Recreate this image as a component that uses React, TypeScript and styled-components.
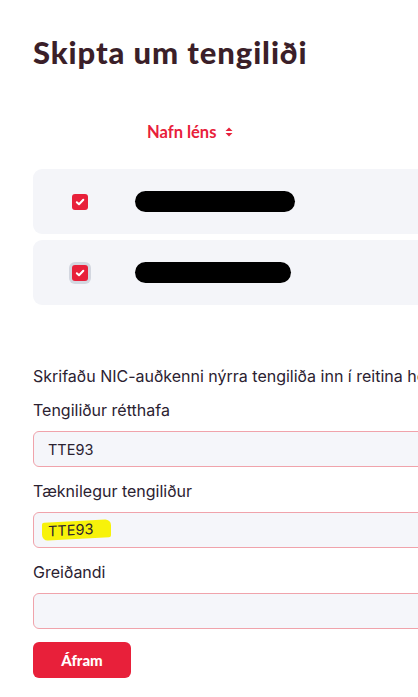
import styled, { createGlobalStyle } from 'styled-components';

const GlobalStyle = createGlobalStyle`
  html, body {
    margin: 0;
    padding: 0;
    background: #ffffff;
    overflow: hidden;
  }
  body {
    font-family: Inter, "Noto Sans", sans-serif;
    color: #2b2231;
  }
`;

const domains = [
    { id: 1, width: 160, focused: false },
    { id: 2, width: 156, focused: true },
];

const fields = [
    { label: 'Tengiliður rétthafa', value: 'TTE93', marked: false },
    { label: 'Tæknilegur tengiliður', value: 'TTE93', marked: true },
    { label: 'Greiðandi', value: '', marked: false },
];

const CheckIcon = () => (
    <svg width="10" height="10" viewBox="0 0 10 10">
        <path d="M1.8 5.2 L4 7.3 L8.3 2.8" stroke="#fff" strokeWidth="2" fill="none" strokeLinecap="round" strokeLinejoin="round" />
    </svg>
);

const SortIcon = () => (
    <svg width="8" height="10" viewBox="0 0 8 10">
        <path d="M4 0.5 L7.5 4 H0.5 Z" fill="#e8203a" />
        <path d="M4 9.5 L7.5 6 H0.5 Z" fill="#e8203a" />
    </svg>
);

export default function App() {
    return (
        <>
            <GlobalStyle />
            <Page>
                <Title>Skipta um tengiliði</Title>
                <TableHead>
                    <SortHeader>
                        Nafn léns
                        <SortIcon />
                    </SortHeader>
                </TableHead>
                <Rows>
                    {domains.map(d => (
                        <DomainRow key={d.id}>
                            <CheckCell>
                                <CheckBox focused={d.focused}>
                                    <CheckIcon />
                                </CheckBox>
                            </CheckCell>
                            <Redacted style={{ width: d.width }} />
                        </DomainRow>
                    ))}
                </Rows>
                <Intro>Skrifaðu NIC-auðkenni nýrra tengiliða inn í reitina hér fyrir neðan</Intro>
                <Form>
                    {fields.map(f => (
                        <Field key={f.label}>
                            <Label>{f.label}</Label>
                            <InputBox>
                                {f.marked ? <Marked>{f.value}</Marked> : f.value}
                            </InputBox>
                        </Field>
                    ))}
                </Form>
                <SubmitButton>Áfram</SubmitButton>
            </Page>
        </>
    );
}

const Page = styled.div`
    width: 760px;
    padding: 33px 0 40px 33px;
`;

const Title = styled.h1`
    margin: 0;
    font-family: Lato, sans-serif;
    font-weight: 900;
    font-size: 31px;
    line-height: 38px;
    letter-spacing: 0.9px;
    color: #3b1f29;
`;

const TableHead = styled.div`
    display: flex;
    padding: 49px 0 0 114px;
    height: 36px;
`;

const SortHeader = styled.div`
    display: flex;
    align-items: center;
    gap: 9px;
    height: 24px;
    font-family: Lato, sans-serif;
    font-weight: 700;
    font-size: 16.5px;
    color: #e8203a;
`;

const Rows = styled.div`
    display: flex;
    flex-direction: column;
    gap: 6px;
    margin-top: 13px;
`;

const DomainRow = styled.div`
    display: flex;
    align-items: center;
    height: 65px;
    background: #f4f5f9;
    border-radius: 9px;
`;

const CheckCell = styled.div`
    width: 102px;
    display: flex;
    justify-content: flex-start;
    padding-left: 39px;
    box-sizing: border-box;
`;

const CheckBox = styled.div<{ focused: boolean }>`
    width: 16px;
    height: 16px;
    border-radius: 3px;
    background: #e8203a;
    display: flex;
    align-items: center;
    justify-content: center;
    box-shadow: ${p => (p.focused ? '0 0 0 3px #d3d7e0' : 'none')};
`;

const Redacted = styled.div`
    height: 21px;
    background: #000;
    border-radius: 11px;
`;

const Intro = styled.p`
    margin: 61px 0 0;
    font-size: 16px;
    line-height: 20px;
    white-space: nowrap;
    color: #2b2231;
`;

const Form = styled.div`
    display: flex;
    flex-direction: column;
    gap: 13px;
    margin-top: 13px;
`;

const Field = styled.div`
    display: flex;
    flex-direction: column;
    gap: 10px;
`;

const Label = styled.label`
    font-size: 16px;
    line-height: 22px;
    color: #2b2231;
`;

const InputBox = styled.div`
    height: 36px;
    box-sizing: border-box;
    border: 1px solid #f0a3ab;
    border-radius: 6px;
    background: #f5f6fa;
    padding: 0 14px;
    display: flex;
    align-items: center;
    font-size: 14.5px;
    color: #2b2231;
`;

const Marked = styled.span`
    background: #f7f20a;
    padding: 0 18px 0 6px;
    margin-left: -6px;
    border-radius: 2px 6px 2px 6px;
    transform: skewY(-3deg);
    display: inline-block;
    line-height: 18px;
`;

const SubmitButton = styled.button`
    margin-top: 13px;
    width: 98px;
    height: 36px;
    border: none;
    border-radius: 6px;
    background: #e8203a;
    color: #fff;
    font-family: Lato, sans-serif;
    font-weight: 900;
    font-size: 15px;
`;
